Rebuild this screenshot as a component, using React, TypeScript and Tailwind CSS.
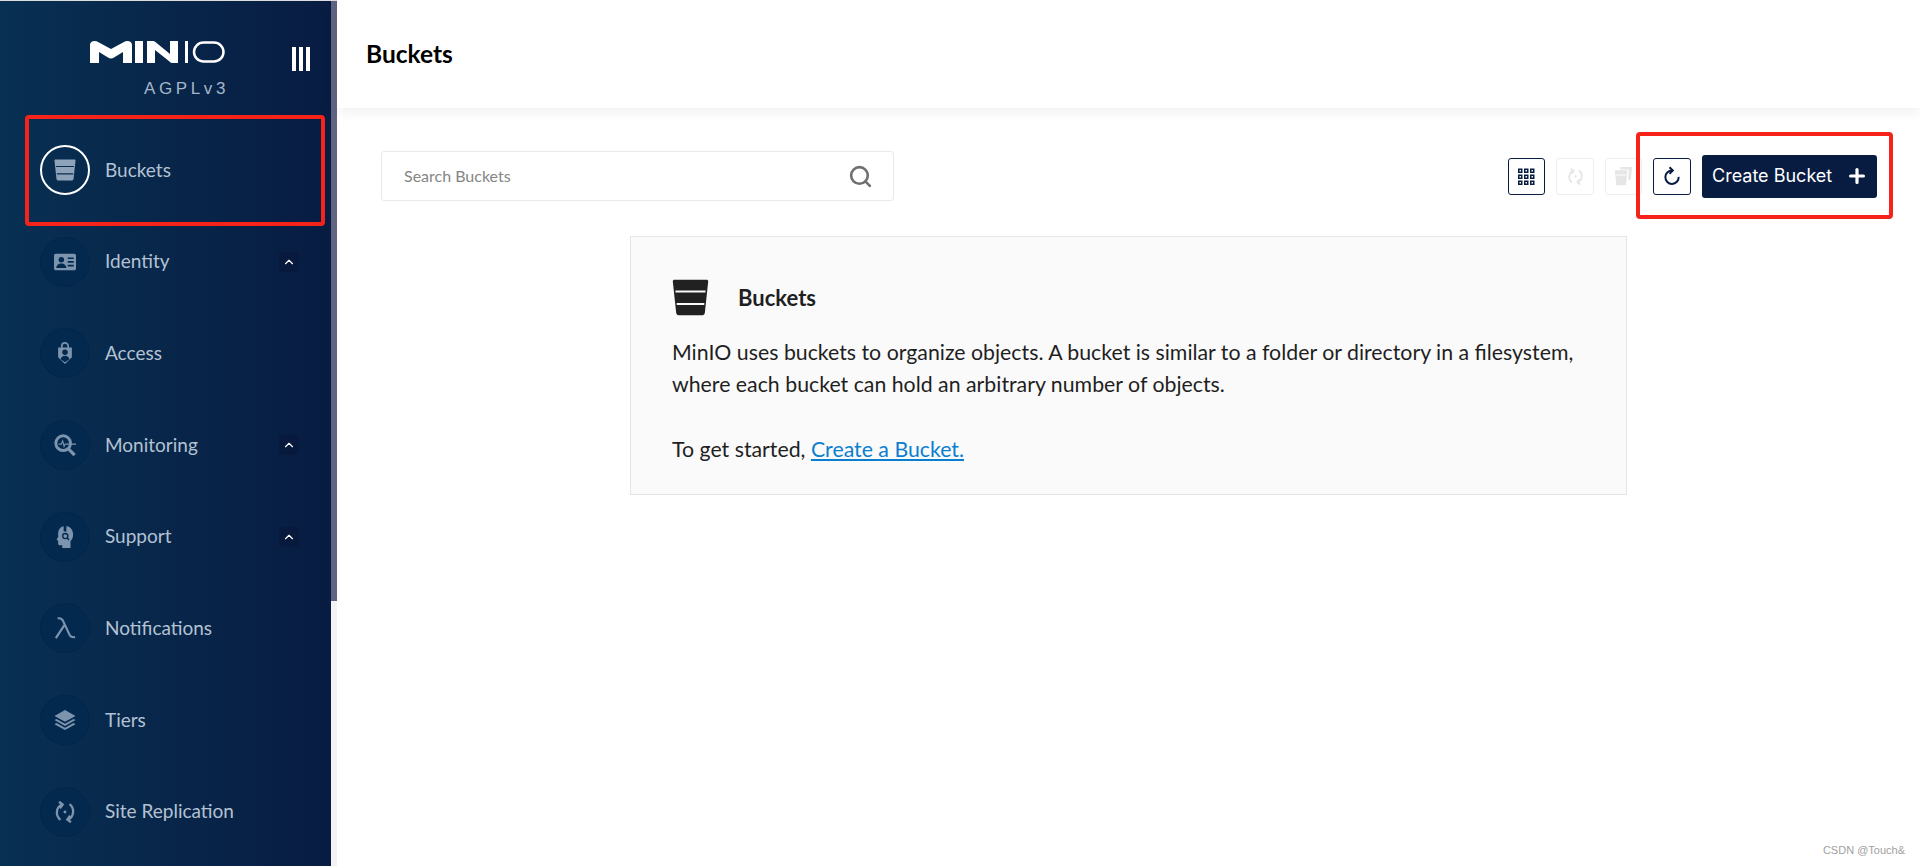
import React from 'react';
import { Search, ChevronUp, Plus } from 'lucide-react';

// Sidebar icons, all drawn on a 24x24 box
const BucketIcon = ({ className }: { className?: string }) => (
  <svg viewBox="0 0 24 24" className={className} fill="currentColor">
    <path fillRule="evenodd" d="M.5 1.500C.5.900 1 .5 1.600.5h20.800c.6 0 1.100.4 1.100 1l-2.200 20.400c-.1.900-.7 1.600-1.600 1.600H4.300c-.9 0-1.500-.7-1.600-1.600L.5 1.500zM2.200 7.500l.1 1.300h19.400l.1-1.300H2.200zM3 15.500l.1 1.300h17.800l.1-1.300H3z" />
  </svg>
);

const IdentityIcon = ({ className }: { className?: string }) => (
  <svg viewBox="0 0 24 24" className={className} fill="currentColor">
    <path fillRule="evenodd" d="M2 3h20c1.100 0 2 .9 2 2v14c0 1.100-.9 2-2 2H2c-1.100 0-2-.9-2-2V5c0-1.100.9-2 2-2zm6 3.500a3 3 0 100 6 3 3 0 000-6zM2.500 18.500h11c0-2.800-2.400-4.800-5.500-4.800s-5.500 2-5.500 4.800zM15 7v1.800h6.500V7H15zm0 4v1.800h6.500V11H15zm0 4v1.800h6.500V15H15z" />
  </svg>
);

const AccessIcon = ({ className }: { className?: string }) => (
  <svg viewBox="0 0 24 24" className={className} fill="currentColor">
    <path d="M4.500 6h15v10.500L12 24l-7.500-7.500V6z" />
    <path d="M8.500 6.500V4.500a3.500 3.500 0 017 0v2" fill="none" stroke="currentColor" strokeWidth="1.800" />
    <circle cx="12" cy="11.200" r="3" fill="#04294f" />
    <path d="M7.200 18.800c.4-2.400 2.400-3.800 4.800-3.800s4.400 1.400 4.800 3.800L12 22.200l-4.800-3.400z" fill="#04294f" />
  </svg>
);

const MonitoringIcon = ({ className }: { className?: string }) => (
  <svg viewBox="0 0 24 24" className={className} fill="none" stroke="currentColor">
    <circle cx="10" cy="10" r="8" strokeWidth="3.200" />
    <path d="M15.500 16l7 7" strokeWidth="3.600" />
    <path d="M5 11h3l1.500-3.500 1.500 6 1.200-2.500H24" strokeWidth="1.200" />
  </svg>
);

const SupportIcon = ({ className }: { className?: string }) => (
  <svg viewBox="0 0 24 24" className={className} fill="currentColor">
    <path d="M12 0c5.200 0 8.800 3.800 8.800 9 0 3.500-.8 5.800-2.800 7.500V24H9v-3H6.500c-1.200 0-2-.8-2-2v-3L2.800 15l1.900-3.500C3.500 5 6.800 0 12 0z" />
    <rect x="10.500" y="0" width="3" height="6" fill="#04294f" />
    <circle cx="12.300" cy="11" r="2.800" fill="none" stroke="#04294f" strokeWidth="1.500" />
    <path d="M14.300 13l2.200 2.200" stroke="#04294f" strokeWidth="1.500" />
  </svg>
);

const LambdaIcon = ({ className }: { className?: string }) => (
  <svg viewBox="0 0 24 24" className={className} fill="none" stroke="currentColor" strokeWidth="2.400">
    <path d="M4 1.500c3.500-.6 5 .5 6 3l7 15c.8 1.800 2 3 6 2.500M11.500 8.500L2 23" />
  </svg>
);

const TiersIcon = ({ className }: { className?: string }) => (
  <svg viewBox="0 0 24 24" className={className} fill="currentColor">
    <path d="M12 1l11.500 6.500L12 14 .5 7.500 12 1z" />
    <path d="M.5 12l2.200-1.200L12 16l9.300-5.200 2.200 1.200L12 18.500.5 12z" />
    <path d="M.5 16.500l2.200-1.200L12 20.500l9.300-5.200 2.200 1.200L12 23 .5 16.500z" />
  </svg>
);

const ReplicationIcon = ({ className }: { className?: string }) => (
  <svg viewBox="0 0 24 24" className={className} fill="none" stroke="currentColor" strokeWidth="2.500">
    <path d="M9 3.500A10 10 0 007 20.500" />
    <path d="M15 20.500A10 10 0 0017 3.500" />
    <path d="M5.500 .8L9.500 3.800 6.500 8" />
    <path d="M18.500 23.200L14.500 20.200 17.500 16" />
    <circle cx="12" cy="12" r="1.600" fill="currentColor" stroke="none" />
  </svg>
);

const navItems = [
  { label: 'Buckets', icon: BucketIcon, active: true },
  { label: 'Identity', icon: IdentityIcon, chevron: true },
  { label: 'Access', icon: AccessIcon },
  { label: 'Monitoring', icon: MonitoringIcon, chevron: true },
  { label: 'Support', icon: SupportIcon, chevron: true },
  { label: 'Notifications', icon: LambdaIcon },
  { label: 'Tiers', icon: TiersIcon },
  { label: 'Site Replication', icon: ReplicationIcon },
];

const Logo = () => (
  <svg viewBox="0 0 135 22" className="h-[22px] w-[135px]" fill="#fff">
    <path d="M0 22V4C0 1.500 2 0 4.500 0c1.500 0 2.700.4 4 1.200L21 8l12.500-6.800C34.800.4 36 0 37.500 0 40 0 42 1.500 42 4V22h-9V11L24 16.500c-2 1.200-4 1.200-6 0L9 11V22H0z" />
    <rect x="45" y="0" width="8" height="22" />
    <path d="M57 22V0h5.500c1.500 0 2.500.5 3.500 1.500L80 13V0h8v22h-5c-1.500 0-2.500-.5-3.500-1.500L65 9v13h-8z" />
    <rect x="95" y="0" width="3" height="22" />
    <rect x="104" y="1.500" width="29.500" height="19" rx="9.500" fill="none" stroke="#fff" strokeWidth="2.500" />
  </svg>
);

export default function App() {
  return (
    <div className="relative flex h-screen w-full overflow-hidden bg-white font-['Lato','Noto_Sans',sans-serif]">
      {/* Sidebar */}
      <aside className="flex w-[331px] shrink-0 flex-col bg-gradient-to-r from-[#073052] to-[#081c42]">
        <div className="flex h-[124px] shrink-0 justify-between pl-[90px] pr-[21px] pt-[41px]">
          <div className="flex flex-col items-end">
            <Logo />
            <span className="-mr-[4px] mt-[16px] font-['Liberation_Sans',sans-serif] text-[17px] leading-5 tracking-[3.600px] text-[#a6b6ca]">AGPLv3</span>
          </div>
          <div className="ml-[1px] mt-[6px] flex h-6 gap-[3px]">
            <span className="w-[4px] bg-white" />
            <span className="w-[4px] bg-white" />
            <span className="w-[4px] bg-white" />
          </div>
        </div>
        {navItems.map((item) => {
          const Icon = item.icon;
          return (
            <div key={item.label} className="flex h-[91.700px] shrink-0 items-center pl-[40px] pr-[32px]">
              <div
                className={
                  item.active
                    ? 'flex h-[50px] w-[50px] items-center justify-center rounded-full border-2 border-white text-[#8ea3ba]'
                    : 'flex h-[50px] w-[50px] items-center justify-center rounded-full border border-[#03254a] bg-[#04294f] text-[#7c94ad]'
                }
              >
                <Icon className="h-[22px] w-[22px]" />
              </div>
              <span className="ml-[15px] flex-1 text-[19px] text-[#b3c2d3]">{item.label}</span>
              {item.chevron && (
                <div className="flex h-5 w-5 items-center justify-center rounded-sm bg-[#071a3e] text-white">
                  <ChevronUp size={14} strokeWidth={2} />
                </div>
              )}
            </div>
          );
        })}
      </aside>

      {/* Scrollbar */}
      <div className="w-[6px] shrink-0 bg-[#f3f3f5]">
        <div className="h-[601px] bg-[#5f6580]" />
      </div>

      {/* Main */}
      <main className="flex min-w-0 flex-1 flex-col bg-white">
        <header className="z-10 flex h-[108px] shrink-0 items-center bg-white pl-[29px] shadow-[0_3px_12px_rgba(0,0,0,0.07)]">
          <h1 className="text-[24.500px] font-bold text-black">Buckets</h1>
        </header>
        <section className="flex-1 pl-[44px] pr-[43px] pt-[43px]">
          <div className="flex items-center justify-between">
            <div className="flex h-[50px] w-[513px] items-center rounded-[3px] border border-[#eaeaea] pl-[22px] pr-[20px]">
              <input
                placeholder="Search Buckets"
                className="min-w-0 flex-1 bg-transparent text-[16px] outline-none placeholder:text-[#858585]"
              />
              <Search size={25} strokeWidth={2.500} className="text-[#6f6f6f]" />
            </div>
            <div className="flex items-center gap-[11px]">
              <button className="flex h-[37px] w-[37px] items-center justify-center rounded-[3px] border border-[#081c42] text-[#081c42]">
                <svg viewBox="0 0 17 17" className="h-[17px] w-[17px]" fill="currentColor">
                  {[0, 6, 12].flatMap((y) =>
                    [0, 6, 12].map((x) => (
                      <path key={`${x}-${y}`} fillRule="evenodd" d={`M${x} ${y + 0.5}h4.500v4.500h-4.500zM${x + 1.5} ${y + 2}v1.500h1.500v-1.500z`} />
                    )),
                  )}
                </svg>
              </button>
              <button className="flex h-[37px] w-[38px] items-center justify-center rounded-[3px] border border-[#eeeeee] text-[#e6e6e6]">
                <ReplicationIcon className="h-[17px] w-[17px]" />
              </button>
              <button className="flex h-[37px] w-[37px] items-center justify-center rounded-[3px] border border-[#eeeeee] text-[#e6e6e6]">
                <svg viewBox="0 0 24 24" className="h-[19px] w-[19px]" fill="currentColor">
                  <path d="M8 0h15l-2 16h-3L19 3H8V0z" />
                  <path fillRule="evenodd" d="M1 4h16l-1.800 19H3L1 4zm1.500 5.500l.2 1.300h12.800l.2-1.300H2.500z" />
                </svg>
              </button>
              <button className="flex h-[37px] w-[38px] items-center justify-center rounded-[3px] border border-[#081c42] text-[#081c42]">
                <svg viewBox="0 0 24 24" className="h-[20px] w-[20px]" fill="none" stroke="currentColor" strokeWidth="2.400">
                  <path d="M12.500 5.500A8 8 0 1020 13" />
                  <path d="M9 1.500l4 4-4 4" />
                </svg>
              </button>
              <button className="flex h-[43px] w-[175px] items-center justify-between rounded-[3px] bg-[#081c42] pl-[10px] pr-[9px] font-['Inter',sans-serif] text-[18px] text-white">
                <span className="pb-[2px]">Create Bucket</span>
                <Plus size={22} strokeWidth={3.500} />
              </button>
            </div>
          </div>

          {/* Info card */}
          <div className="ml-[249px] mt-[35px] h-[259px] w-[997px] border border-[#e5e5e5] bg-[#fafafa] pl-[41px] pt-[42px] text-[#1f1f1f]">
            <div className="flex items-center">
              <BucketIcon className="h-[37px] w-[37px] text-[#212121]" />
              <h2 className="ml-[29px] text-[22px] font-bold">Buckets</h2>
            </div>
            <p className="mt-[20px] text-[21.300px] leading-[32.300px]">
              MinIO uses buckets to organize objects. A bucket is similar to a folder or directory in a filesystem,
              <br />
              where each bucket can hold an arbitrary number of objects.
              <br />
              <br />
              To get started, <a className="text-[#0a7fd0] underline">Create a Bucket.</a>
            </p>
          </div>
        </section>
      </main>

      {/* Annotation overlays */}
      <div className="absolute left-0 right-0 top-0 h-px bg-[#dddddd]" />
      <div className="pointer-events-none absolute left-[25px] top-[115px] h-[111px] w-[300px] rounded-[4px] border-[4px] border-[#f5231a]" />
      <div className="pointer-events-none absolute left-[1636px] top-[132px] h-[87px] w-[257px] rounded-[4px] border-[4px] border-[#f5231a]" />
      <span className="absolute bottom-[8px] right-[15px] font-['Liberation_Sans',sans-serif] text-[11px] text-[#a0a0a0]">CSDN @Touch&amp;</span>
    </div>
  );
}
